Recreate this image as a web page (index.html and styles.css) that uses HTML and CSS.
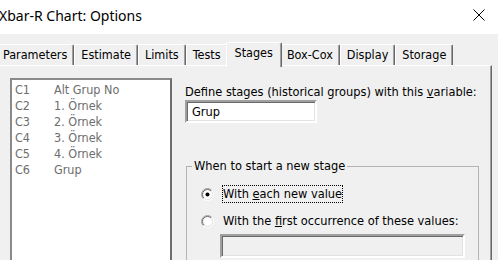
FILE: index.html
```html
<!DOCTYPE html>
<html>
<head>
<meta charset="utf-8">
<link rel="stylesheet" href="styles.css">
</head>
<body>
<div class="window">
  <header class="titlebar">
    <span class="title">Xbar-R Chart: Options</span>
    <svg class="close" viewBox="0 0 12 12"><path d="M0.5 0.5L11.5 11.5M11.5 0.5L0.5 11.5" stroke="#000" stroke-width="1" fill="none"/></svg>
  </header>
  <div class="dialog">
    <nav class="tabs">
      <span class="tab">Parameters</span>
      <span class="tab">Estimate</span>
      <span class="tab">Limits</span>
      <span class="tab">Tests</span>
      <span class="tab active">Stages</span>
      <span class="tab">Box-Cox</span>
      <span class="tab">Display</span>
      <span class="tab">Storage</span>
    </nav>
    <section class="panel">
      <div class="varlist">
        <div class="row"><span class="col">C1</span><span>Alt Grup No</span></div>
        <div class="row"><span class="col">C2</span><span>1. Örnek</span></div>
        <div class="row"><span class="col">C3</span><span>2. Örnek</span></div>
        <div class="row"><span class="col">C4</span><span>3. Örnek</span></div>
        <div class="row"><span class="col">C5</span><span>4. Örnek</span></div>
        <div class="row"><span class="col">C6</span><span>Grup</span></div>
      </div>
      <div class="form">
        <div class="lbl">Define stages (historical groups) with this <u>v</u>ariable:</div>
        <div class="textbox">Grup</div>
        <fieldset class="group">
          <legend>When to start a new stage</legend>
          <div class="radio-row">
            <svg class="radio" viewBox="0 0 13 13">
              <circle cx="6.5" cy="6.5" r="5" fill="#fff"/>
              <path d="M2.257 10.743A6 6 0 0 1 10.743 2.257" stroke="#a0a0a0" fill="none"/>
              <path d="M10.743 2.257A6 6 0 0 1 2.257 10.743" stroke="#ffffff" fill="none"/>
              <path d="M2.964 10.036A5 5 0 0 1 10.036 2.964" stroke="#696969" fill="none"/>
              <path d="M10.036 2.964A5 5 0 0 1 2.964 10.036" stroke="#e3e3e3" fill="none"/>
              <circle cx="6.5" cy="6.5" r="2" fill="#000"/>
            </svg>
            <span class="opt focus">With <u>e</u>ach new value</span>
          </div>
          <div class="radio-row">
            <svg class="radio" viewBox="0 0 13 13">
              <circle cx="6.5" cy="6.5" r="5" fill="#fff"/>
              <path d="M2.257 10.743A6 6 0 0 1 10.743 2.257" stroke="#a0a0a0" fill="none"/>
              <path d="M10.743 2.257A6 6 0 0 1 2.257 10.743" stroke="#ffffff" fill="none"/>
              <path d="M2.964 10.036A5 5 0 0 1 10.036 2.964" stroke="#696969" fill="none"/>
              <path d="M10.036 2.964A5 5 0 0 1 2.964 10.036" stroke="#e3e3e3" fill="none"/>
            </svg>
            <span class="opt">With the <u>f</u>irst occurrence of these values:</span>
          </div>
          <div class="textbox disabled"></div>
        </fieldset>
      </div>
    </section>
  </div>
</div>
</body>
</html>
```

FILE: styles.css
```css
html, body {
  margin: 0;
  padding: 0;
}
body {
  width: 498px;
  height: 260px;
  overflow: hidden;
  background: #f0f0f0;
  font-family: "DejaVu Sans Condensed", "DejaVu Sans", sans-serif;
  font-stretch: condensed;
  font-size: 12.5px;
  color: #000;
}
.titlebar {
  height: 34px;
  background: #fff;
  display: flex;
  justify-content: space-between;
  align-items: flex-start;
}
.title {
  font-family: "Noto Sans", sans-serif;
  font-size: 14px;
  line-height: 31px;
  margin-left: -1px;
}
.close {
  width: 12px;
  height: 12px;
  margin: 9px 13px 0 0;
}
.dialog {
  margin-left: -4px;
  padding-top: 8px;
  width: 496px;
}
.tabs {
  display: flex;
  align-items: flex-end;
  height: 23px;
  position: relative;
  z-index: 1;
}
.tab {
  height: 20px;
  line-height: 19px;
  padding: 0 6px;
  border: 1px solid;
  border-bottom: 0;
  border-color: #fff #696969 transparent #fff;
  box-shadow: inset -1px 0 0 #a0a0a0;
  border-radius: 2px 2px 0 0;
  white-space: nowrap;
}
.tab.active {
  height: 24px;
  line-height: 19px;
  margin: 0 -2px -2px;
  padding: 0 8px;
  background: #f0f0f0;
  position: relative;
  z-index: 2;
}
.panel {
  display: flex;
  align-items: flex-start;
  height: 194px;
  overflow: hidden;
  border-top: 1px solid #fff;
  border-left: 1px solid #fff;
  border-right: 1px solid #696969;
  box-shadow: inset -1px 0 0 #a0a0a0;
}
.varlist {
  margin: 12px 0 0 13px;
  width: 162px;
  height: 190px;
  box-sizing: border-box;
  border: 2px solid;
  border-color: #8a8a8a #6d6d6d #6d6d6d #8a8a8a;
  background: #fff;
  padding: 2px 0 0 3px;
  color: #6d6d6d;
}
.row {
  height: 16px;
  line-height: 16px;
  white-space: nowrap;
}
.col {
  display: inline-block;
  width: 39px;
}
.form {
  margin: 18px 0 0 13px;
  display: flex;
  flex-direction: column;
  align-items: flex-start;
  font-size: 12.7px;
}
.lbl {
  line-height: 16px;
  white-space: nowrap;
}
.textbox {
  box-sizing: border-box;
  width: 132px;
  height: 23px;
  line-height: 19px;
  padding-left: 5px;
  background: #fff;
  border: 2px solid;
  border-color: #a0a0a0 #fff #fff #a0a0a0;
  box-shadow: inset 1px 1px 0 #696969, inset -1px -1px 0 #e3e3e3;
}
.group {
  margin: 35px 0 0 1px;
  padding: 11px 0 0 14px;
  width: 293px;
  height: 110px;
  box-sizing: border-box;
  border: 1px solid #b4b4b4;
}
.group legend {
  margin-left: -9px;
  padding: 0 2px;
  line-height: 16px;
}
.radio-row {
  display: flex;
  align-items: center;
  height: 18px;
  margin-bottom: 9px;
}
.radio {
  width: 13px;
  height: 13px;
  flex: none;
  margin-right: 8px;
}
.opt {
  line-height: 16px;
  border: 1px solid transparent;
  white-space: nowrap;
}
.opt.focus {
  border: 1px dotted #000;
}
.textbox.disabled {
  margin: -5px 0 0 19px;
  width: 245px;
  height: 24px;
  background: #f0f0f0;
}
```
